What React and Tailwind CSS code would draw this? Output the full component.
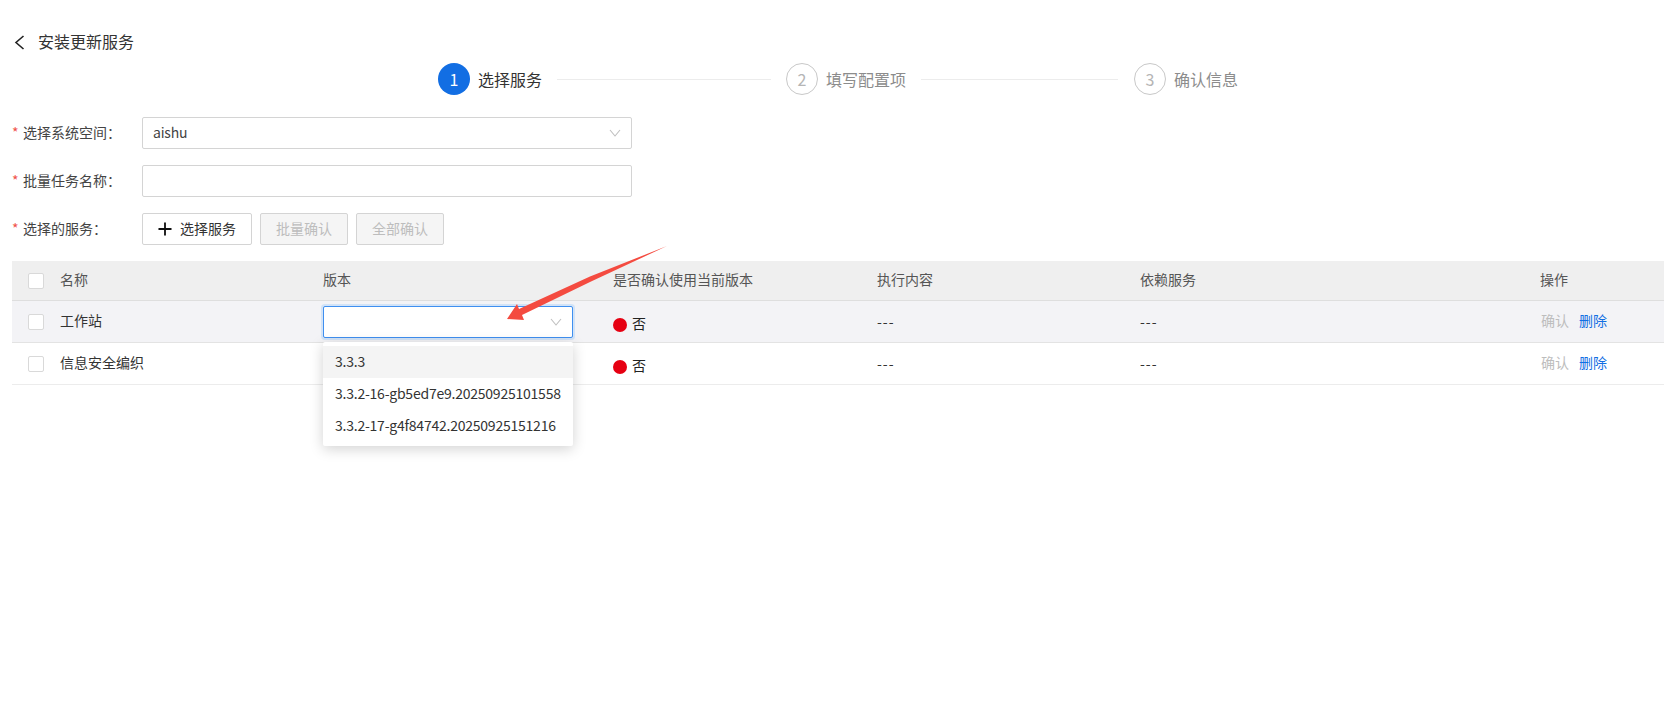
import React from "react";
import { Plus } from "lucide-react";

const rows = [
    { name: "工作站", active: true },
    { name: "信息安全编织", active: false },
];

const versions = ["3.3.3", "3.3.2-16-gb5ed7e9.20250925101558", "3.3.2-17-g4f84742.20250925151216"];

const Checkbox = () => <span className="block w-[16px] h-[16px] rounded-[2px] border border-[#d9d9d9] bg-white" />;

const Caret = () => (
    <svg width="12" height="8" viewBox="0 0 12 8" fill="none" stroke="#bfbfbf" strokeWidth="1.1">
        <path d="M1 1 L6 7 L11 1" />
    </svg>
);

const Step = ({ n, label, active }) => (
    <div className="flex items-center">
        <span
            className={
                active
                    ? "flex w-[32px] h-[32px] items-center justify-center rounded-full bg-[#126ee3] text-white text-[16px]"
                    : "flex w-[32px] h-[32px] items-center justify-center rounded-full border border-[#c8c8c8] text-[#b5b5b5] text-[16px]"
            }
        >
            {n}
        </span>
        <span className={active ? "ml-[8px] pb-[1px] text-[16px] text-[#333]" : "ml-[8px] pb-[1px] text-[16px] text-[#8c8c8c]"}>{label}</span>
    </div>
);

const FormRow = ({ label, children }) => (
    <div className="flex items-center h-[32px]">
        <div className="w-[130px] pb-[2px] flex items-center text-[14px] text-[#444]">
            <span className="w-[11px] text-[#f0524a]">*</span>
            {label}
        </div>
        {children}
    </div>
);

const App = () => {
    return (
        <div
            className="relative w-[1679px] h-[707px] overflow-hidden bg-white pl-[12px] pt-[31px]"
            style={{ fontFamily: '"Noto Sans CJK SC", "Noto Sans", sans-serif' }}
        >
            {/* Header */}
            <div className="flex items-center h-[22px] text-[16px] text-[#333]">
                <svg className="ml-[2px]" width="11" height="15" viewBox="0 0 11 15" fill="none" stroke="#222" strokeWidth="1.6">
                    <path d="M9.5 1 L2 7.5 L9.5 14" />
                </svg>
                <span className="ml-[13px] pb-[2px]">安装更新服务</span>
            </div>

            {/* Steps */}
            <div className="flex items-center h-[32px] mt-[10px] pl-[426px]">
                <Step n="1" label="选择服务" active />
                <span className="ml-[15px] mr-[15px] w-[214px] h-px bg-[#ececec]" />
                <Step n="2" label="填写配置项" />
                <span className="ml-[15px] mr-[16px] w-[197px] h-px bg-[#ececec]" />
                <Step n="3" label="确认信息" />
            </div>

            {/* Form */}
            <div className="mt-[22px] flex flex-col gap-[16px]">
                <FormRow label="选择系统空间：">
                    <div className="flex items-center justify-between w-[490px] h-[32px] rounded-[2px] border border-[#d4d4d4] pl-[10px] pr-[10px] text-[14px] tracking-[-0.2px] text-[#444]">
                        <span className="pb-[2px]">aishu</span>
                        <Caret />
                    </div>
                </FormRow>
                <FormRow label="批量任务名称：">
                    <div className="w-[490px] h-[32px] rounded-[2px] border border-[#d4d4d4]" />
                </FormRow>
                <FormRow label="选择的服务：">
                    <button className="flex items-center w-[110px] h-[32px] pl-[12px] rounded-[2px] border border-[#d4d4d4] bg-white text-[14px] text-[#333]">
                        <Plus className="w-[20px] h-[20px] mr-[5px] text-[#111]" strokeWidth={2.2} />
                        <span className="pb-[1px]">选择服务</span>
                    </button>
                    <button className="ml-[8px] w-[88px] h-[32px] pb-[1px] rounded-[2px] border border-[#d4d4d4] bg-[#f5f5f5] text-[14px] text-[#bdbdbd]">批量确认</button>
                    <button className="ml-[8px] w-[88px] h-[32px] pb-[1px] rounded-[2px] border border-[#d4d4d4] bg-[#f5f5f5] text-[14px] text-[#bdbdbd]">全部确认</button>
                </FormRow>
            </div>

            {/* Table */}
            <div className="mt-[16px] w-[1652px] text-[14px]">
                <div className="grid grid-cols-[48px_263px_290px_264px_263px_400px_124px] items-center h-[40px] bg-[#efefef] border-b border-[#dedede] text-[#555]">
                    <div className="pl-[16px]"><Checkbox /></div>
                    <div className="pb-[2px]">名称</div>
                    <div className="pb-[2px]">版本</div>
                    <div className="pb-[2px]">是否确认使用当前版本</div>
                    <div className="pb-[2px]">执行内容</div>
                    <div className="pb-[2px]">依赖服务</div>
                    <div className="pb-[2px]">操作</div>
                </div>
                {rows.map((row) => (
                    <div
                        key={row.name}
                        className={
                            row.active
                                ? "grid grid-cols-[48px_263px_290px_264px_263px_400px_124px] items-center h-[42px] bg-[#f3f3f6] border-b border-[#e3e3e3] text-[#333]"
                                : "grid grid-cols-[48px_263px_290px_264px_263px_400px_124px] items-center h-[42px] border-b border-[#ececec] text-[#333]"
                        }
                    >
                        <div className="pl-[16px]"><Checkbox /></div>
                        <div className="pb-[2px]">{row.name}</div>
                        <div>
                            {row.active && (
                                <div className="flex items-center justify-end w-[250px] h-[32px] rounded-[2px] border border-[#3f8ff0] bg-white pr-[10px] shadow-[0_0_0_2px_rgba(24,144,255,0.15)]">
                                    <Caret />
                                </div>
                            )}
                        </div>
                        <div className="flex items-center pt-[6px]">
                            <span className="w-[14px] h-[14px] rounded-full bg-[#e60012]" />
                            <span className="ml-[5px] pb-[2px] text-[#222]">否</span>
                        </div>
                        <div className="tracking-[1px]">---</div>
                        <div className="tracking-[1px]">---</div>
                        <div className="flex items-center pl-[1px] pb-[2px]">
                            <span className="text-[#bdbdbd]">确认</span>
                            <span className="ml-[10px] text-[#126ee3]">删除</span>
                        </div>
                    </div>
                ))}
            </div>

            {/* Version dropdown */}
            <div className="absolute left-[323px] top-[342px] w-[250px] py-[4px] bg-white rounded-[2px] shadow-[0_3px_14px_rgba(0,0,0,0.18)] text-[14px] tracking-[-0.23px] text-[#333]">
                {versions.map((v, i) => (
                    <div key={v} className={i === 0 ? "flex items-center h-[32px] pl-[12px] pb-[2px] whitespace-nowrap bg-[#f4f4f4]" : "flex items-center h-[32px] pl-[12px] pb-[2px] whitespace-nowrap"}>
                        {v}
                    </div>
                ))}
            </div>

            {/* Annotation arrow */}
            <svg className="absolute left-[500px] top-[240px]" width="175" height="85" viewBox="0 0 175 85">
                <path d="M167 6 L90 36.5 L19 69 L17 64 L7 79 L24 80 L22 75 L90 42 Z" fill="#f44b40" />
            </svg>
        </div>
    );
};

export default App;
